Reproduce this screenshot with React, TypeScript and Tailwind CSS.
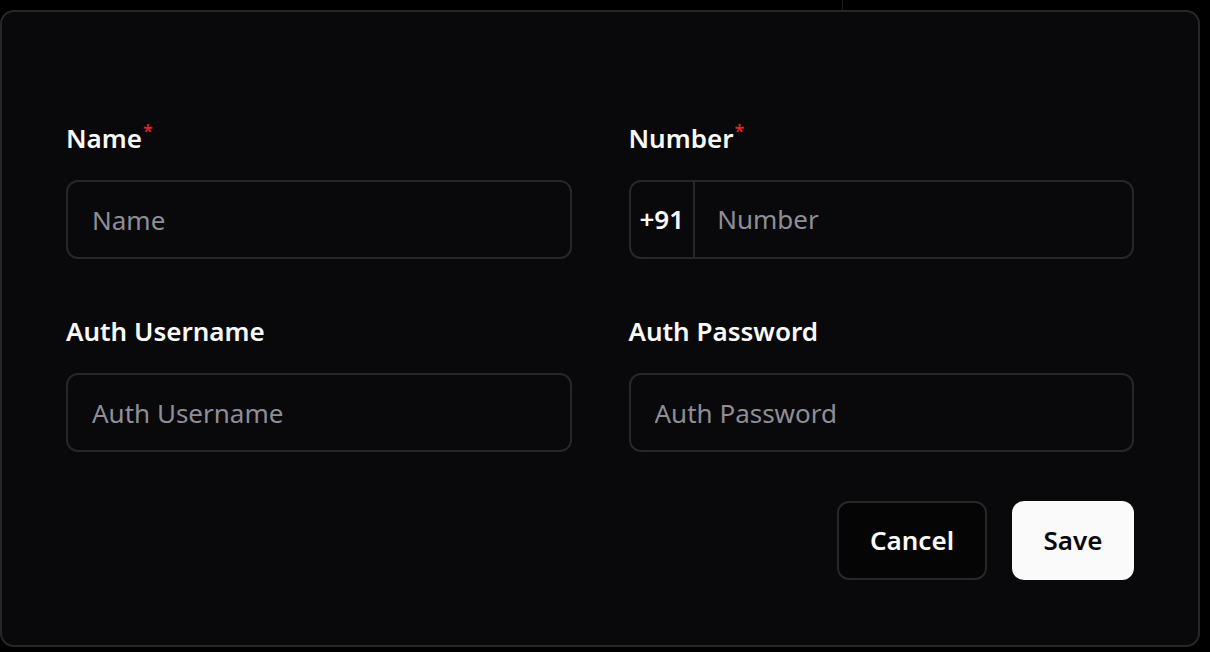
import { ReactNode } from "react";

const Label = ({ children, required }: { children: ReactNode; required?: boolean }) => {
  return (
    <label className="block text-[26px] leading-[40px] font-semibold text-[#fafafa] mb-[22px]">
      {children}
      {required && (
        <span className="relative -top-[10px] ml-[1px] text-[18px] leading-none text-[#dc2626]">*</span>
      )}
    </label>
  );
};

const inputCls =
  "w-full h-[79px] rounded-[12px] border-2 border-[#27272a] bg-transparent px-[24px] text-[26px] text-[#fafafa] placeholder:text-[#8e8e96] outline-none";

export default function App() {
  return (
    <div className="min-h-screen bg-black" style={{ fontFamily: '"Noto Sans", "Open Sans", sans-serif' }}>
      {/* strip above the card, with the column divider behind */}
      <div className="h-[10px]">
        <div className="ml-[842px] w-px h-full bg-[#1c1c1f]" />
      </div>

      <div className="w-[1200px] h-[637px] rounded-[14px] border-2 border-[#27272a] bg-[#09090b] px-16 pt-[106px]">
        <form onSubmit={(e) => e.preventDefault()}>
          <div className="grid grid-cols-2 gap-x-[57px] gap-y-[52px]">
            <div>
              <Label required>Name</Label>
              <input className={inputCls} placeholder="Name" />
            </div>

            <div>
              <Label required>Number</Label>
              <div className="flex h-[79px] rounded-[12px] border-2 border-[#27272a] overflow-hidden">
                <span className="flex items-center px-[9px] text-[26px] font-semibold text-[#fafafa] border-r-2 border-[#27272a]">
                  +91
                </span>
                <input
                  className="flex-1 min-w-0 bg-transparent px-[22px] text-[26px] text-[#fafafa] placeholder:text-[#8e8e96] outline-none"
                  placeholder="Number"
                />
              </div>
            </div>

            <div>
              <Label>Auth Username</Label>
              <input className={inputCls} placeholder="Auth Username" />
            </div>

            <div>
              <Label>Auth Password</Label>
              <input className={inputCls} placeholder="Auth Password" />
            </div>
          </div>

          <div className="flex justify-end gap-[25px] mt-[49px]">
            <button
              type="button"
              className="w-[150px] h-[79px] rounded-[12px] border-2 border-[#27272a] bg-[#050506] text-[26px] font-semibold text-[#fafafa]"
            >
              Cancel
            </button>
            <button className="w-[122px] h-[79px] rounded-[12px] bg-[#fafafa] text-[26px] font-semibold text-[#09090b]">
              Save
            </button>
          </div>
        </form>
      </div>
    </div>
  );
}
